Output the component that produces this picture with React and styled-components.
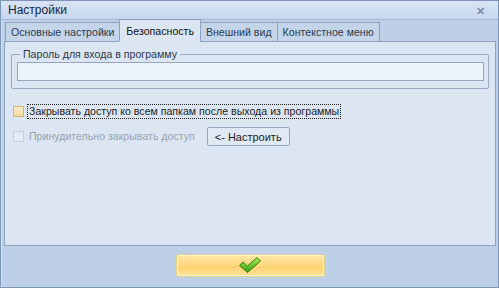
import styled, { createGlobalStyle } from 'styled-components'

const Global = createGlobalStyle`
  html, body {
    margin: 0;
    padding: 0;
    background: #bdd0e7;
  }
  body {
    font-family: "Liberation Sans", Arial, sans-serif;
    font-size: 10.6px;
    color: #1e1e1e;
  }
`

const Window = styled.div`
  width: 499px;
  height: 288px;
  box-sizing: border-box;
  border: 1px solid #7b95b8;
  background: #bdd0e7;
  display: flex;
  flex-direction: column;
`

const TitleBar = styled.div`
  height: 18px;
  display: flex;
  align-items: center;
  justify-content: space-between;
  padding: 0 13px 0 7px;
  background: linear-gradient(#d8e4f3, #c7d8ee);
  border-bottom: 1px solid #a6bad6;
  font-size: 12px;
  color: #15273f;
`

const Close = styled.span`
  color: #7d8ea6;
  font-size: 11px;
  font-weight: bold;
  margin-top: 3px;
`

const Body = styled.div`
  flex: 1;
  display: flex;
  flex-direction: column;
  padding: 0 2px 0 2px;
  border-left: 1px solid #d6e2f1;
`

const Tabs = styled.div`
  display: flex;
  align-items: flex-end;
  height: 21px;
  padding-left: 2px;
  position: relative;
  z-index: 1;
`

const Tab = styled.div`
  box-sizing: border-box;
  height: ${p => (p.$active ? '23px' : '20px')};
  padding: 0 ${p => (p.$active ? '6px' : '5px')};
  display: flex;
  align-items: center;
  border: 1px solid #8da2c0;
  border-bottom: ${p => (p.$active ? '1px solid #dbe6f2' : '1px solid #8da2c0')};
  margin-left: -1px;
  background: ${p => (p.$active ? '#dbe6f2' : '#c4d5ea')};
  color: ${p => (p.$active ? '#111' : '#2d3b4e')};
  margin-bottom: -1px;
`

const Panel = styled.div`
  height: 205px;
  box-sizing: border-box;
  background: #dbe6f2;
  border: 1px solid #8da2c0;
  padding: 6px 6px 0 6px;
`

const Group = styled.fieldset`
  margin: 0;
  padding: 2px 4px 7px 5px;
  border: 1px solid #97a9c3;
  border-radius: 2px;
  legend {
    padding: 0 3px;
    margin-left: 3px;
    color: #2c3a4e;
  }
`

const Input = styled.div`
  height: 17px;
  background: #ebf3fd;
  border: 1px solid #93a5bf;
`

const Rows = styled.div`
  display: flex;
  flex-direction: column;
  gap: 6px;
  padding: 13px 0 0 2px;
`

const Row = styled.div`
  display: flex;
  align-items: center;
  gap: 4px;
  height: 19px;
`

const Box = styled.span`
  width: 9px;
  height: 9px;
  border: 1px solid ${p => (p.$disabled ? '#c6cfdb' : '#d6b46e')};
  background: ${p => (p.$disabled ? '#e4eaf2' : 'linear-gradient(#fbecc8, #f5d99a)')};
`

const Label = styled.span`
  color: ${p => (p.$disabled ? '#9aa3ae' : '#1e1e1e')};
  outline: ${p => (p.$focus ? '1px dotted #222' : 'none')};
  outline-offset: 0;
  padding: 0 1px;
  line-height: 13px;
`

const SmallButton = styled.button`
  margin-left: 7px;
  height: 19px;
  padding: 0 7px;
  font: inherit;
  font-size: 11px;
  color: #1e1e1e;
  background: #e0e9f4;
  border: 1px solid #94a7c2;
  border-radius: 2px;
`

const Footer = styled.div`
  flex: 1;
  display: flex;
  justify-content: center;
  align-items: center;
  padding-bottom: 3px;
`

const OkButton = styled.button`
  width: 149px;
  height: 23px;
  border: 1px solid #ded08a;
  border-radius: 2px;
  background: linear-gradient(#ffe7a6, #fed77e 50%, #fcd06b 51%, #ffe39a);
  box-shadow: inset 0 0 0 1px #fff3c9;
  display: flex;
  align-items: center;
  justify-content: center;
  padding: 0;
`

const Check = () => (
  <svg width="24" height="18" viewBox="0 0 24 18">
    <defs>
      <linearGradient id="g" x1="0" y1="0" x2="0" y2="1">
        <stop offset="0" stopColor="#a6ea5a" />
        <stop offset="1" stopColor="#3a9d12" />
      </linearGradient>
    </defs>
    <path
      d="M1.5 9.5 L5 6 L9.5 10 L19 1.5 L22.5 5 L9.5 16.5 Z"
      fill="url(#g)"
      stroke="#2f7f10"
      strokeWidth="1"
      strokeLinejoin="round"
    />
  </svg>
)

export default function App() {
  return (
    <>
      <Global />
      <Window>
        <TitleBar>
          <span>Настройки</span>
          <Close>✕</Close>
        </TitleBar>
        <Body>
          <Tabs>
            <Tab>Основные настройки</Tab>
            <Tab $active>Безопасность</Tab>
            <Tab>Внешний вид</Tab>
            <Tab>Контекстное меню</Tab>
          </Tabs>
          <Panel>
            <Group>
              <legend>Пароль для входа в программу</legend>
              <Input />
            </Group>
            <Rows>
              <Row>
                <Box />
                <Label $focus>Закрывать доступ ко всем папкам после выхода из программы</Label>
              </Row>
              <Row>
                <Box $disabled />
                <Label $disabled>Принудительно закрывать доступ</Label>
                <SmallButton>&lt;- Настроить</SmallButton>
              </Row>
            </Rows>
          </Panel>
          <Footer>
            <OkButton>
              <Check />
            </OkButton>
          </Footer>
        </Body>
      </Window>
    </>
  )
}
